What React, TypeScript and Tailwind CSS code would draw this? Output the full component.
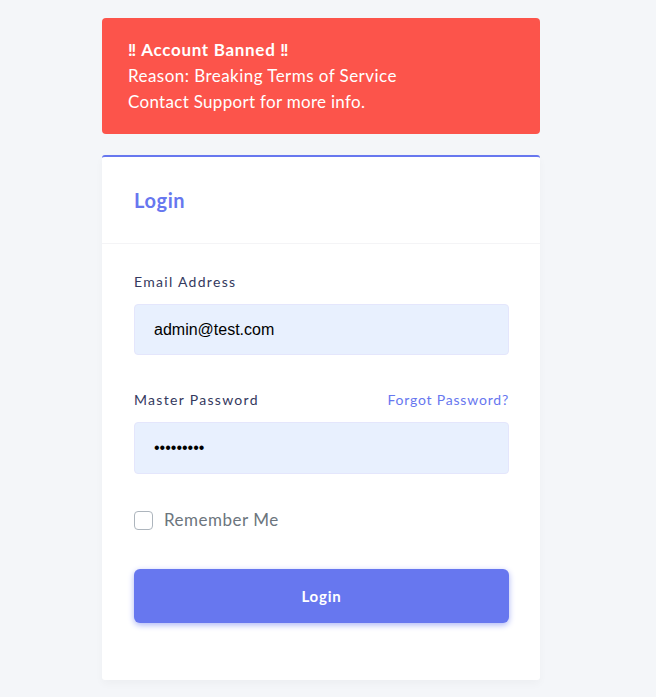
import React from "react";

export default function App() {
  const font = { fontFamily: "Lato, 'Noto Sans', sans-serif" };
  return (
    <div className="min-h-[697px] w-full bg-[#f4f6f9] pt-[18px]" style={font}>
      <div className="ml-[102px] w-[438px]">
        <div className="rounded-[4px] bg-[#fc544b] px-[26px] py-[19px] text-[17px] leading-[26px] tracking-[0.45px] text-white">
          <div className="font-bold tracking-[0.7px]">‼ Account Banned ‼</div>
          <div>Reason: Breaking Terms of Service</div>
          <div className="tracking-[0.3px]">Contact Support for more info.</div>
        </div>

        <div className="mt-[21px] rounded-[3px] border-t-2 border-[#6777ef] bg-white shadow-[0_4px_8px_rgba(0,0,0,0.03)]">
          <div className="border-b border-[#f4f4f6] px-8 py-[29px]">
            <h4 className="text-[20px] font-bold leading-[28px] tracking-[0.6px] text-[#6777ef]">Login</h4>
          </div>
          <div className="pb-[57px] pl-8 pr-[31px] pt-[28px]">
            <label className="block text-[14px] leading-[20px] tracking-[1.3px] text-[#34395e]">
              Email Address
            </label>
            <div className="mt-[12px] flex h-[51px] items-center rounded-[4px] border border-[#e4e6fc] bg-[#e8f0fe] px-[19px] text-[16px] text-black" style={{ fontFamily: "'Liberation Sans', Arial, sans-serif" }}>
              admin@test.com
            </div>

            <div className="mt-[35px] flex items-center justify-between text-[14px] leading-[20px]">
              <span className="tracking-[1.3px] text-[#34395e]">Master Password</span>
              <span className="tracking-[0.8px] text-[#6777ef]">Forgot Password?</span>
            </div>
            <div className="mt-[12px] flex h-[52px] items-center rounded-[4px] border border-[#e4e6fc] bg-[#e8f0fe] px-[19px] text-[16px] text-black" style={{ fontFamily: "'Liberation Sans', Arial, sans-serif" }}>
              •••••••••
            </div>

            <div className="mt-[34px] flex h-[24px] items-center gap-[11px]">
              <span className="block h-[19px] w-[19px] rounded-[4px] border border-[#adb5bd] bg-white" />
              <span className="text-[17px] tracking-[0.5px] text-[#6c757d]">Remember Me</span>
            </div>

            <button className="mt-[37px] flex h-[54px] w-full items-center justify-center rounded-[6px] bg-[#6777ef] text-[15px] font-bold tracking-[0.8px] text-white shadow-[0_2px_6px_#acb5f6]">
              Login
            </button>
          </div>
        </div>
      </div>
    </div>
  );
}
